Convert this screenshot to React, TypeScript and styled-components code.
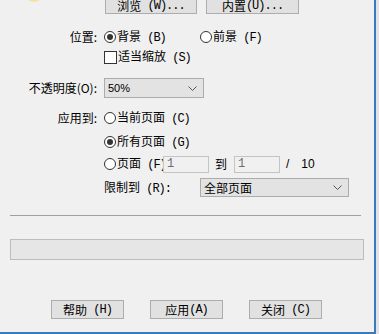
import React from "react";
import styled, { createGlobalStyle } from "styled-components";

const GlobalStyle = createGlobalStyle`
  html, body {
    margin: 0;
    padding: 0;
    background: #e2e2e2;
  }
  body {
    width: 379px;
    height: 334px;
    overflow: hidden;
  }
`;

const cjkFont = `"Noto Sans CJK SC", sans-serif`;

export default function App() {
  return (
    <>
      <GlobalStyle />
      <Window>
        <TopRow>
          <CutIcon width="16" height="4" viewBox="0 0 16 4">
            <ellipse cx="8" cy="-2" rx="6" ry="4" fill="#f6d88a" opacity="0.7" />
          </CutIcon>
          <Button $w={92} $h={17}>浏览<Key> (W)...</Key></Button>
          <Button $w={93} $h={17}>内置<Key>(U)...</Key></Button>
        </TopRow>

        <FormRow $top={14} $h={18}>
          <Label>位置:</Label>
          <Inline>
            <Option $w={96}>
              <Radio $checked />
              <OptionText>背景<Key> (B)</Key></OptionText>
            </Option>
            <Option>
              <Radio />
              <OptionText>前景<Key> (F)</Key></OptionText>
            </Option>
          </Inline>
        </FormRow>

        <FormRow $top={2} $h={18}>
          <span />
          <Option>
            <Checkbox />
            <OptionText>适当缩放<Key> (S)</Key></OptionText>
          </Option>
        </FormRow>

        <FormRow $top={12} $h={20}>
          <Label>不透明度(O):</Label>
          <Select $w={100} $h={20}>
            <SelectValue $sans>50%</SelectValue>
            <Chevron />
          </Select>
        </FormRow>

        <FormRow $top={11} $h={18}>
          <Label>应用到:</Label>
          <Option>
            <Radio />
            <OptionText>当前页面<Key> (C)</Key></OptionText>
          </Option>
        </FormRow>

        <FormRow $top={6} $h={18}>
          <span />
          <Option>
            <Radio $checked />
            <OptionText>所有页面<Key> (G)</Key></OptionText>
          </Option>
        </FormRow>

        <FormRow $top={4} $h={18}>
          <span />
          <Inline>
            <Option>
              <Radio />
              <ClippedText>页面<Key> (F)</Key></ClippedText>
            </Option>
            <PageInput>1</PageInput>
            <OptionText $gap={6}>到</OptionText>
            <PageInput $gap={7}>1</PageInput>
            <Total $gap={6}>/</Total>
            <Total $gap={12}>10</Total>
          </Inline>
        </FormRow>

        <FormRow $top={5} $h={19}>
          <span />
          <Inline>
            <LimitLabel>限制到<Key> (R):</Key></LimitLabel>
            <Select $w={149} $h={19}>
              <SelectValue>全部页面</SelectValue>
              <Chevron />
            </Select>
          </Inline>
        </FormRow>

        <Separator />
        <Progress />

        <BottomRow>
          <Button $w={73} $h={19}>帮助<Key> (H)</Key></Button>
          <Button $w={73} $h={19}>应用<Key>(A)</Key></Button>
          <Button $w={73} $h={19}>关闭<Key> (C)</Key></Button>
        </BottomRow>
      </Window>
    </>
  );
}

function Chevron() {
  return (
    <ChevronIcon width="9" height="5" viewBox="0 0 9 5">
      <path d="M0.5 0.5 L4.5 4.5 L8.5 0.5" fill="none" stroke="#555" strokeWidth="1" />
    </ChevronIcon>
  );
}

const Window = styled.div`
  box-sizing: border-box;
  width: 376px;
  height: 334px;
  background: #f0f0f0;
  border-right: 2px solid #3a7bbf;
  border-bottom: 2px solid #3a7bbf;
  display: flex;
  flex-direction: column;
  font-family: ${cjkFont};
  font-size: 12px;
  color: #000;
`;

const Key = styled.span`
  font-family: "Liberation Mono", monospace;
  font-size: 12px;
  letter-spacing: -1px;
  white-space: pre;
`;

const TopRow = styled.div`
  height: 14px;
  display: flex;
  align-items: flex-end;
  overflow: hidden;
  gap: 9px;
`;

const CutIcon = styled.svg`
  align-self: flex-start;
  margin-left: 26px;
  margin-right: 54px;
`;

const Button = styled.div<{ $w: number; $h: number }>`
  box-sizing: border-box;
  flex: none;
  width: ${(p) => p.$w}px;
  height: ${(p) => p.$h}px;
  border: 1px solid #adadad;
  background: #e1e1e1;
  display: flex;
  align-items: center;
  justify-content: center;
  font-size: 12px;
  line-height: 1;
  white-space: nowrap;
`;

const FormRow = styled.div<{ $top: number; $h: number }>`
  display: grid;
  grid-template-columns: 97px 1fr;
  column-gap: 7px;
  align-items: center;
  margin-top: ${(p) => p.$top}px;
  height: ${(p) => p.$h}px;
`;

const Label = styled.span`
  text-align: right;
  line-height: 1;
  white-space: nowrap;
`;

const Inline = styled.div`
  display: flex;
  align-items: center;
  height: 100%;
`;

const Option = styled.div<{ $w?: number }>`
  display: flex;
  align-items: center;
  flex: none;
  width: ${(p) => (p.$w ? `${p.$w}px` : "auto")};
`;

const Radio = styled.span<{ $checked?: boolean }>`
  box-sizing: border-box;
  flex: none;
  width: 12px;
  height: 12px;
  border: 1px solid #333;
  border-radius: 50%;
  background: #fff;
  display: flex;
  align-items: center;
  justify-content: center;

  &::after {
    content: "";
    display: ${(p) => (p.$checked ? "block" : "none")};
    width: 6px;
    height: 6px;
    border-radius: 50%;
    background: #333;
  }
`;

const Checkbox = styled.span`
  box-sizing: border-box;
  flex: none;
  width: 13px;
  height: 13px;
  border: 1px solid #333;
  background: #fff;
`;

const OptionText = styled.span<{ $gap?: number }>`
  margin-left: ${(p) => p.$gap ?? 1}px;
  font-size: 12px;
  line-height: 1;
  white-space: nowrap;
`;

const ClippedText = styled(OptionText)`
  width: 46px;
  overflow: hidden;
`;

const Select = styled.div<{ $w: number; $h: number }>`
  box-sizing: border-box;
  width: ${(p) => p.$w}px;
  height: ${(p) => p.$h}px;
  border: 1px solid #acacac;
  background: #e3e3e3;
  display: flex;
  align-items: center;
  padding: 0 6px 0 3px;
`;

const SelectValue = styled.span<{ $sans?: boolean }>`
  flex: 1;
  font-family: ${(p) => (p.$sans ? `"Liberation Sans", sans-serif` : cjkFont)};
  font-size: ${(p) => (p.$sans ? 11 : 12)}px;
  line-height: 1;
`;

const ChevronIcon = styled.svg`
  flex: none;
`;

const PageInput = styled.span<{ $gap?: number }>`
  box-sizing: border-box;
  flex: none;
  width: 46px;
  height: 17px;
  margin-left: ${(p) => p.$gap ?? 0}px;
  border: 1px solid #c4c4c4;
  background: #f0f0f0;
  color: #6d6d6d;
  display: flex;
  align-items: center;
  padding-left: 3px;
  font-family: "Liberation Mono", monospace;
  font-size: 12px;
  line-height: 1;
`;

const Total = styled.span<{ $gap: number }>`
  margin-left: ${(p) => p.$gap}px;
  font-family: "Liberation Sans", sans-serif;
  font-size: 12px;
  line-height: 1;
`;

const LimitLabel = styled(OptionText)`
  margin-left: 0;
  width: 96px;
`;

const Separator = styled.div`
  margin: 18px 13px 0 10px;
  border-top: 1px solid #a0a0a0;
`;

const Progress = styled.div`
  box-sizing: border-box;
  margin: 23px 10px 0 10px;
  height: 21px;
  border: 1px solid #bcbcbc;
  background: #e6e6e6;
`;

const BottomRow = styled.div`
  display: flex;
  gap: 26px;
  margin-top: 40px;
  padding-left: 51px;
`;
